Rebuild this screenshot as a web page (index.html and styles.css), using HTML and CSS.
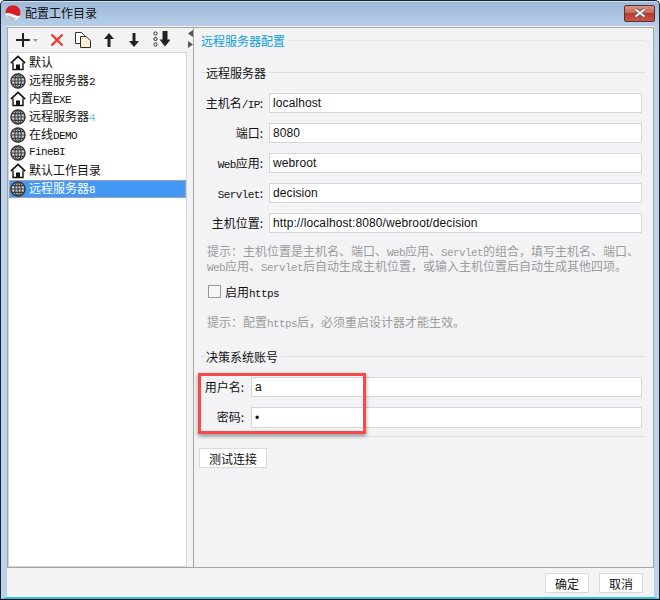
FILE: index.html
```html
<!DOCTYPE html>
<html lang="zh-CN">
<head>
<meta charset="utf-8">
<title>配置工作目录</title>
<link rel="stylesheet" href="styles.css">
</head>
<body>
<svg class="defs" width="0" height="0" aria-hidden="true">
  <symbol id="house" viewBox="0 0 16 16">
    <path d="M0.8 8.2 8 1.4 15.2 8.2" fill="none" stroke="#111" stroke-width="1.6"/>
    <path d="M3 7.4V14.5H13V7.4" fill="#fff" stroke="#111" stroke-width="1.4"/>
    <rect x="6" y="9.5" width="4" height="5" fill="#111"/>
  </symbol>
  <symbol id="globe" viewBox="0 0 16 16">
    <circle cx="8" cy="8" r="7" fill="#c9ced6" stroke="#333" stroke-width="1.5"/>
    <ellipse cx="8" cy="8" rx="3.2" ry="7" fill="none" stroke="#3c3c3c" stroke-width="1.2"/>
    <path d="M1 8H15M2 4.6H14M2 11.4H14M8 1V15" fill="none" stroke="#3c3c3c" stroke-width="1.2"/>
  </symbol>
</svg>
<div class="window">
  <header class="titlebar">
    <svg class="logo" width="16" height="16" viewBox="0 0 16 16">
      <circle cx="8" cy="8" r="7.6" fill="#f4f4f4"/>
      <path d="M0.4 8C.6 3 4 .3 8 .3c4.500 0 7.500 3.200 7.600 8 .1 1.700-1.200 2.800-3 2.600-3-.3-6-2.600-9-2.800-1.200-.1-2.600.4-3.200-.1Z" fill="#d32027"/>
      <path d="M1.500 10c3 .3 6 2.800 9.500 3l-2 2.500c-3 .3-6-1.500-7.500-5.500Z" fill="#777" opacity=".45"/>
    </svg>
    <span class="title-text">配置工作目录</span>
    <button class="close" type="button" aria-label="关闭">
      <svg width="14" height="10" viewBox="0 0 14 10"><path d="M2.500 1.500 11.500 8.500M11.500 1.500 2.500 8.500" stroke="#5a5a66" stroke-width="3.600"/><path d="M2.500 1.500 11.500 8.500M11.500 1.500 2.500 8.500" stroke="#f2f2f4" stroke-width="2.200"/></svg>
    </button>
  </header>

  <div class="client">
    <div class="frame">
      <aside class="left">
        <div class="toolbar">
          <svg class="t-plus" width="22" height="14" viewBox="0 0 22 14"><path d="M7 0V14M0 7H14" stroke="#222" stroke-width="2"/><path d="M17 6H22L19.500 9Z" fill="#999"/></svg>
          <svg class="t-del" width="14" height="14" viewBox="0 0 14 14"><path d="M1.500 1.500 12.500 12.500M12.500 1.500 1.500 12.500" stroke="#ee3a2c" stroke-width="2.400"/></svg>
          <svg class="t-copy" width="16" height="16" viewBox="0 0 16 16"><path d="M.5.500H6.500L9.500 3.500V11.500H.5Z" fill="#fff" stroke="#333"/><path d="M5.500 4.500H11L15.500 8.500V15.500H5.500Z" fill="#fdf3d8" stroke="#333"/></svg>
          <svg class="t-up" width="12" height="14" viewBox="0 0 12 14"><path d="M6 0 11 6H7.500V14H4.500V6H1Z" fill="#222"/></svg>
          <svg class="t-down" width="12" height="14" viewBox="0 0 12 14"><path d="M6 14 11 8H7.500V0H4.500V8H1Z" fill="#222"/></svg>
          <svg class="t-sort" width="17" height="17" viewBox="0 0 17 17"><path d="M9.500 0H14.500V8.500H17.500L12 15.500 6.500 8.500H9.500Z" fill="#222"/><g fill="#fff" stroke="#222"><circle cx="2.500" cy="2.500" r="1.600"/><circle cx="2.500" cy="8" r="1.600"/><circle cx="2.500" cy="13.500" r="1.600"/></g></svg>
        </div>
        <ul class="tree">
          <li class="item"><svg class="ico"><use href="#house"/></svg><span>默认</span></li>
          <li class="item"><svg class="ico"><use href="#globe"/></svg><span>远程服务器<span class="lat">2</span></span></li>
          <li class="item"><svg class="ico"><use href="#house"/></svg><span>内置<span class="lat">EXE</span></span></li>
          <li class="item"><svg class="ico"><use href="#globe"/></svg><span>远程服务器<span class="lat pale">4</span></span></li>
          <li class="item"><svg class="ico"><use href="#globe"/></svg><span>在线<span class="lat">DEMO</span></span></li>
          <li class="item"><svg class="ico"><use href="#globe"/></svg><span class="lat">FineBI</span></li>
          <li class="item"><svg class="ico"><use href="#house"/></svg><span>默认工作目录</span></li>
          <li class="item selected"><svg class="ico"><use href="#globe"/></svg><span>远程服务器<span class="lat">8</span></span></li>
        </ul>
      </aside>

      <div class="splitter">
        <svg width="5" height="7" viewBox="0 0 5 7"><path d="M5 0V7L0 3.500Z" fill="#555"/></svg>
        <svg width="5" height="7" viewBox="0 0 5 7"><path d="M0 0V7L5 3.500Z" fill="#555"/></svg>
      </div>

      <main class="right">
        <div class="outer-head"><span class="outer-title">远程服务器配置</span><span class="outer-line"></span></div>

        <div class="sec-head"><span class="sec-dash"></span><span>远程服务器</span><span class="sec-line"></span></div>
        <div class="rows">
          <label class="row"><span class="lab">主机名<span class="lat">/IP</span>:</span><input class="field" value="localhost"></label>
          <label class="row"><span class="lab">端口:</span><input class="field" value="8080"></label>
          <label class="row"><span class="lab"><span class="lat">Web</span>应用:</span><input class="field" value="webroot"></label>
          <label class="row"><span class="lab"><span class="lat">Servlet</span>:</span><input class="field" value="decision"></label>
          <label class="row"><span class="lab">主机位置:</span><input class="field" value="http://localhost:8080/webroot/decision"></label>
        </div>
        <p class="hint hint-a">提示：主机位置是主机名、端口、<span class="lat">Web</span>应用、<span class="lat">Servlet</span>的组合，填写主机名、端口、<br><span class="lat">Web</span>应用、<span class="lat">Servlet</span>后自动生成主机位置，或输入主机位置后自动生成其他四项。</p>
        <div class="check"><span class="box"></span><span>启用<span class="lat">https</span></span></div>
        <p class="hint hint-b">提示：配置<span class="lat">https</span>后，必须重启设计器才能生效。</p>

        <div class="sec-head sec-two"><span class="sec-dash"></span><span>决策系统账号</span><span class="sec-line"></span></div>
        <div class="account">
          <label class="row short"><span class="lab">用户名:</span><input class="field" value="a"></label>
          <label class="row short tall"><span class="lab">密码:</span><input class="field" type="password" value="a"></label>
          <div class="marker"></div>
        </div>
        <div class="sec-end"></div>
        <button class="btn test" type="button">测试连接</button>
      </main>
    </div>
    <footer class="actions">
      <button class="btn act" type="button">确定</button>
      <button class="btn act" type="button">取消</button>
    </footer>
  </div>
</div>
</body>
</html>
```

FILE: styles.css
```css
* { box-sizing: border-box; }
html, body { margin: 0; padding: 0; }
body {
  width: 660px;
  height: 600px;
  overflow: hidden;
  font: 12px/15px "Noto Sans CJK SC", sans-serif;
  color: #111;
  background: #fff;
}
.defs { position: absolute; }
.lat {
  font-family: "Liberation Mono", "DejaVu Sans Mono", monospace;
  font-size: 11px;
  letter-spacing: -.6px;
  line-height: 0;
  font-weight: 400;
}
.pale { color: #6cc6e8; }

.window {
  width: 660px;
  height: 600px;
  display: flex;
  flex-direction: column;
  border: 1px solid #1a2230;
  border-bottom-color: #0a0a0a;
  border-radius: 5px 5px 0 0;
  background: linear-gradient(#9db8d6, #bbd3ec 30px);
  overflow: hidden;
}
.titlebar {
  height: 25px;
  flex: none;
  display: flex;
  align-items: center;
  padding: 0 4px 2px 4px;
  box-shadow: inset 0 1px 0 #cfe0f0;
}
.logo { flex: none; margin-right: 4px; }
.title-text { flex: 1; color: #101010; }
.close {
  width: 31px;
  height: 17px;
  padding: 0;
  display: flex;
  align-items: center;
  justify-content: center;
  border: 1px solid #5b2f38;
  border-radius: 2px;
  background: linear-gradient(#d99182 0, #c96a5c 45%, #b73a2c 50%, #c65848 100%);
  margin-top: 1px;
}

.client {
  flex: 1;
  min-height: 0;
  padding-top: 1px;
  display: flex;
  flex-direction: column;
  background: #f3f3f6;
  border-left: 6px solid #bbd3ec;
  border-right: 5px solid #bbd3ec;
  border-bottom: 2px solid #2cc0e4;
}

.frame {
  height: 541px;
  flex: none;
  display: flex;
  border: 1px solid #a6a69a;
}
.left {
  width: 179px;
  flex: none;
  display: flex;
  flex-direction: column;
}
.toolbar {
  height: 24px;
  flex: none;
  display: flex;
  align-items: center;
  padding: 0 0 1px 8px;
  background: #f3f3f6;
}
.t-del { margin-left: 12px; }
.t-copy { margin-left: 11px; }
.t-up { margin-left: 12px; }
.t-down { margin-left: 13px; }
.t-sort { margin-left: 13px; }
.tree {
  flex: 1;
  margin: 0;
  padding: 1px 0 0;
  list-style: none;
  background: #fff;
  border: 1px solid #d4d4d4;
}
.item {
  height: 18px;
  display: flex;
  align-items: center;
  padding-left: 1px;
  white-space: nowrap;
}
.item > span { margin-bottom: 3px; }
.ico { width: 16px; height: 16px; flex: none; margin-right: 3px; }
.item.selected {
  background: #4499f6;
  color: #fff;
  box-shadow: inset 0 0 0 1px #9a9fc0;
}

.splitter {
  width: 7px;
  flex: none;
  display: flex;
  flex-direction: column;
  align-items: center;
  gap: 4px;
  padding-top: 2px;
  border-right: 1px solid #a6a69a;
}
.splitter svg { display: block; }

.right {
  flex: 1;
  min-width: 0;
  padding: 3px 3px 0 7px;
}
.outer-head {
  height: 18px;
  display: flex;
  align-items: center;
}
.outer-title { color: #0aa0e0; white-space: nowrap; margin-right: 2px; }
.outer-line {
  flex: 1;
  height: 10px;
  margin-top: 10px;
  border-top: 1px solid #e4e4e8;
  border-right: 1px solid #e4e4e8;
  border-radius: 0 6px 0 0;
}
.sec-head {
  height: 18px;
  margin-top: 14px;
  margin-right: 4px;
  display: flex;
  align-items: center;
  white-space: nowrap;
}
.sec-dash { width: 4px; height: 1px; background: #dcdce0; margin-right: 1px; }
.sec-line { flex: 1; height: 1px; background: #e0e0e4; margin-left: 3px; }
.sec-two { margin-top: 18px; }

.rows {
  margin-top: 12px;
  display: flex;
  flex-direction: column;
  gap: 10px;
}
.row {
  height: 20px;
  display: flex;
  align-items: center;
  gap: 6px;
  margin-right: 8px;
}
.lab { width: 62px; flex: none; margin-bottom: 2px; text-align: right; white-space: nowrap; }
.field {
  flex: 1;
  min-width: 0;
  height: 100%;
  padding: 0 3px;
  border: 1px solid #d6d6d6;
  background: #fff;
  font: 12px "Liberation Sans", sans-serif;
  letter-spacing: .1px;
  color: #111;
  outline: none;
}
.hint {
  margin: 0 0 0 6px;
  color: #9b9b9b;
  white-space: nowrap;
}
.hint-a { margin-top: 10px; }
.hint-b { margin-top: 15px; }
.check {
  margin: 11px 0 0 7px;
  height: 15px;
  display: flex;
  align-items: center;
  gap: 4px;
}
.box { width: 13px; height: 13px; border: 1px solid #9a9a9a; background: #f6f6f8; }

.account {
  position: relative;
  margin-top: 12px;
  display: flex;
  flex-direction: column;
  gap: 10px;
}
.short { gap: 7px; }
.short .lab { width: 43px; }
.tall { height: 21px; }
.marker {
  position: absolute;
  left: -3px;
  top: -4px;
  width: 168px;
  height: 61px;
  border: 3px solid #f94848;
  box-shadow: 0 2px 4px rgba(0, 0, 0, .4);
  pointer-events: none;
}
.sec-end { margin: 8px 4px 0 0; height: 1px; background: #e0e0e4; }
.btn {
  padding: 0;
  border: 1px solid #dadada;
  background: #fff;
  font: 12px/15px "Noto Sans CJK SC", sans-serif;
  color: #111;
}
.test { display: block; width: 68px; height: 20px; margin: 11px 0 0 -2px; }
.actions {
  flex: 1;
  display: flex;
  justify-content: flex-end;
  align-items: flex-start;
  gap: 10px;
  padding: 5px 11px 0 0;
}
.act { width: 44px; height: 20px; }
```
